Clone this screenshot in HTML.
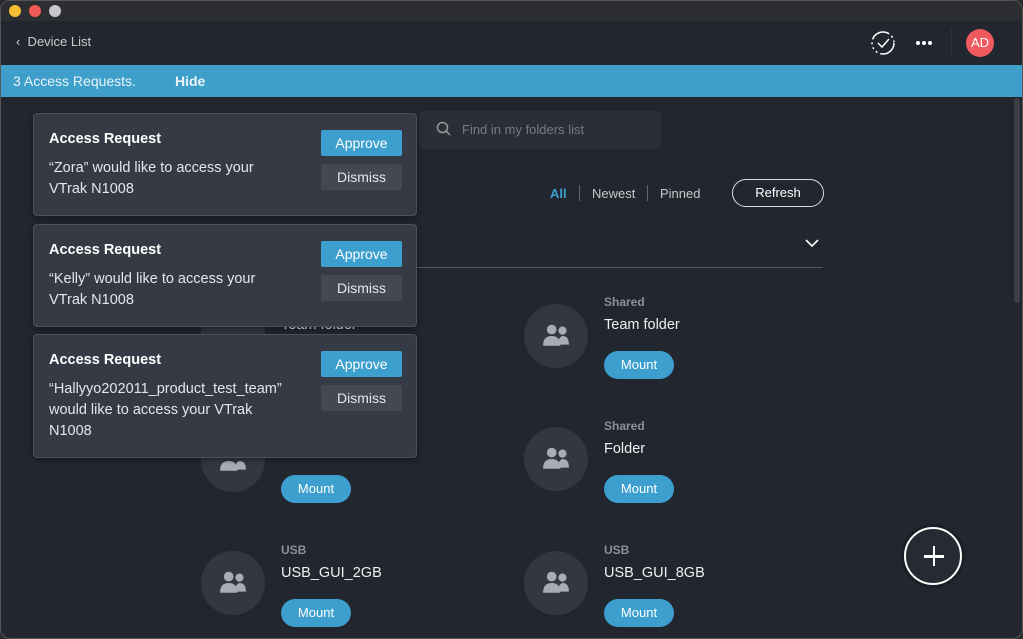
<!DOCTYPE html><html><head><style>
*{margin:0;padding:0;box-sizing:border-box}
body{width:1023px;height:639px;background:#2a2b2e;font-family:"Liberation Sans",sans-serif;overflow:hidden;position:relative}
.win{position:absolute;left:0;top:0;width:1023px;height:639px;background:#22262e;border-radius:10px;overflow:hidden;border:1px solid #555}
.a{position:absolute}
.tb{left:0;top:0;width:1023px;height:20px;background:#2d2e31}
.dot{width:12px;height:12px;border-radius:50%;top:4px}
.hdr{left:0;top:20px;width:1023px;height:44px;background:#22262e}
.ban{left:0;top:64px;width:1023px;height:32px;background:#3e9fca;color:#eaf4f9;font-size:14px}
.card{left:32px;width:384px;background:#363a44;border:1px solid #4c505a;border-radius:4px;box-shadow:0 2px 6px rgba(0,0,0,.4)}
.card h4{position:absolute;left:15px;top:17px;color:#fff;font-size:14.5px;font-weight:bold}
.card p{position:absolute;left:15px;top:44px;color:#e4e6ea;font-size:14.5px;line-height:21px}
.ap{position:absolute;left:287px;width:81px;height:26px;background:#3d9fce;color:#fff;font-size:14px;text-align:center;line-height:26px;border-radius:2px}
.ds{position:absolute;left:287px;width:81px;height:26px;background:#444852;color:#e8e8e8;font-size:14px;text-align:center;line-height:26px;border-radius:2px}
.circ{width:64px;height:64px;border-radius:50%;background:#333740}
.lab{color:#8b8f96;font-size:12px;font-weight:bold}
.nm{color:#f0f0f0;font-size:14.5px}
.mt{width:70px;height:28px;border-radius:14px;background:#3d9fce;color:#fff;font-size:13px;text-align:center;line-height:28px}
</style></head><body><div class="win">
<div class="a tb"></div>
<div class="a dot" style="left:8px;background:#f6be30"></div>
<div class="a dot" style="left:28px;background:#f05a56"></div>
<div class="a dot" style="left:48px;background:#c8c8cc"></div>
<div class="a hdr"></div>
<div class="a" style="left:15px;top:33px;color:#ccc;font-size:13px">&lsaquo;&nbsp; Device List</div>
<svg class="a" style="left:869px;top:29px" width="26" height="26" viewBox="0 0 26 26"><circle cx="13" cy="13" r="11" fill="none" stroke="#fff" stroke-width="1.5" stroke-dasharray="20 3 2 3 2 3 2 3"/><path d="M8 13l4 4 7-8" fill="none" stroke="#fff" stroke-width="1.5"/></svg>
<div class="a" style="left:915px;top:40px;width:4px;height:4px;border-radius:2px;background:#fff;box-shadow:6px 0 #fff,12px 0 #fff"></div>
<div class="a" style="left:950px;top:28px;width:1px;height:28px;background:#333"></div>
<div class="a" style="left:965px;top:28px;width:28px;height:28px;border-radius:50%;background:#ee5a5e;color:#fff;font-size:13px;text-align:center;line-height:28px">AD</div>
<div class="a ban"><span class="a" style="left:12px;top:8px">3 Access Requests.</span><b class="a" style="left:174px;top:8px">Hide</b></div>
<div class="a" style="left:1013px;top:97px;width:6px;height:205px;background:#3a3d44;border-radius:3px"></div>
<div class="a" style="left:418px;top:110px;width:242px;height:38px;background:#2a2e36;border-radius:3px"></div>
<svg class="a" style="left:435px;top:120px" width="16" height="16"><circle cx="6.5" cy="6.5" r="5" fill="none" stroke="#999" stroke-width="1.5"/><path d="M10 10l4 4" stroke="#999" stroke-width="1.5"/></svg>
<div class="a" style="left:461px;top:121px;color:#777b82;font-size:13px">Find in my folders list</div>
<div class="a" style="left:549px;top:185px;font-size:13px;color:#3d9fce;font-weight:bold">All</div>
<div class="a" style="left:578px;top:184px;width:1px;height:16px;background:#666"></div>
<div class="a" style="left:591px;top:185px;font-size:13px;color:#c8c8c8">Newest</div>
<div class="a" style="left:646px;top:184px;width:1px;height:16px;background:#666"></div>
<div class="a" style="left:659px;top:185px;font-size:13px;color:#c8c8c8">Pinned</div>
<div class="a" style="left:731px;top:178px;width:92px;height:28px;border:1.5px solid #ddd;border-radius:14px;color:#fff;font-size:13px;text-align:center;line-height:25px">Refresh</div>
<svg class="a" style="left:803px;top:236px" width="16" height="12"><path d="M2 3l6 6 6-6" fill="none" stroke="#fff" stroke-width="1.6"/></svg>
<div class="a" style="left:200px;top:266px;width:622px;height:1px;background:#555a62"></div>

<div class="a circ" style="left:200px;top:300px"></div>
<div class="a nm" style="left:280px;top:316px">Team folder</div>
<div class="a circ" style="left:523px;top:303px"></div>
<div class="a lab" style="left:603px;top:294px">Shared</div>
<div class="a nm" style="left:603px;top:316px">Team folder</div>
<div class="a mt" style="left:603px;top:350px">Mount</div>
<div class="a circ" style="left:200px;top:427px"></div>
<div class="a mt" style="left:280px;top:474px">Mount</div>
<div class="a circ" style="left:523px;top:426px"></div>
<div class="a lab" style="left:603px;top:418px">Shared</div>
<div class="a nm" style="left:603px;top:440px">Folder</div>
<div class="a mt" style="left:603px;top:474px">Mount</div>
<div class="a circ" style="left:200px;top:550px"></div>
<div class="a lab" style="left:280px;top:542px">USB</div>
<div class="a nm" style="left:280px;top:564px">USB_GUI_2GB</div>
<div class="a mt" style="left:280px;top:598px">Mount</div>
<div class="a circ" style="left:523px;top:550px"></div>
<div class="a lab" style="left:603px;top:542px">USB</div>
<div class="a nm" style="left:603px;top:564px">USB_GUI_8GB</div>
<div class="a mt" style="left:603px;top:598px">Mount</div>
<svg class="a" style="left:541px;top:321px" width="28" height="28" viewBox="0 0 26 26"><g fill="#a9acb3"><circle cx="9" cy="7" r="4.5"/><circle cx="19" cy="8" r="3.8"/><path d="M1 22q0-9 8-9t8 9z"/><path d="M15 21q0-7 4-8 6 0 6 8z"/></g></svg>
<svg class="a" style="left:541px;top:444px" width="28" height="28" viewBox="0 0 26 26"><g fill="#a9acb3"><circle cx="9" cy="7" r="4.5"/><circle cx="19" cy="8" r="3.8"/><path d="M1 22q0-9 8-9t8 9z"/><path d="M15 21q0-7 4-8 6 0 6 8z"/></g></svg>
<svg class="a" style="left:541px;top:568px" width="28" height="28" viewBox="0 0 26 26"><g fill="#a9acb3"><circle cx="9" cy="7" r="4.5"/><circle cx="19" cy="8" r="3.8"/><path d="M1 22q0-9 8-9t8 9z"/><path d="M15 21q0-7 4-8 6 0 6 8z"/></g></svg>
<svg class="a" style="left:218px;top:568px" width="28" height="28" viewBox="0 0 26 26"><g fill="#a9acb3"><circle cx="9" cy="7" r="4.5"/><circle cx="19" cy="8" r="3.8"/><path d="M1 22q0-9 8-9t8 9z"/><path d="M15 21q0-7 4-8 6 0 6 8z"/></g></svg>
<svg class="a" style="left:218px;top:446px" width="28" height="28" viewBox="0 0 26 26"><g fill="#a9acb3"><path d="M1 22q0-9 8-9t8 9z"/><path d="M15 21q0-7 4-8 6 0 6 8z"/></g></svg>

<div class="a" style="left:903px;top:526px;width:58px;height:58px;border-radius:50%;background:#262a32;border:2px solid #fff;box-shadow:0 0 0 3px #1b1e24"></div>
<div class="a" style="left:923px;top:554px;width:20px;height:2.5px;background:#fff"></div>
<div class="a" style="left:931.5px;top:545px;width:2.5px;height:20px;background:#fff"></div>

<div class="a card" style="top:112px;height:103px"><h4>Access Request</h4><p>“Zora” would like to access your<br>VTrak N1008</p><div class="ap" style="top:16px">Approve</div><div class="ds" style="top:50px">Dismiss</div></div>
<div class="a card" style="top:223px;height:103px"><h4>Access Request</h4><p>“Kelly” would like to access your<br>VTrak N1008</p><div class="ap" style="top:16px">Approve</div><div class="ds" style="top:50px">Dismiss</div></div>
<div class="a card" style="top:333px;height:124px"><h4>Access Request</h4><p>“Hallyyo202011_product_test_team”<br>would like to access your VTrak<br>N1008</p><div class="ap" style="top:16px">Approve</div><div class="ds" style="top:50px">Dismiss</div></div>
</div></body></html>
